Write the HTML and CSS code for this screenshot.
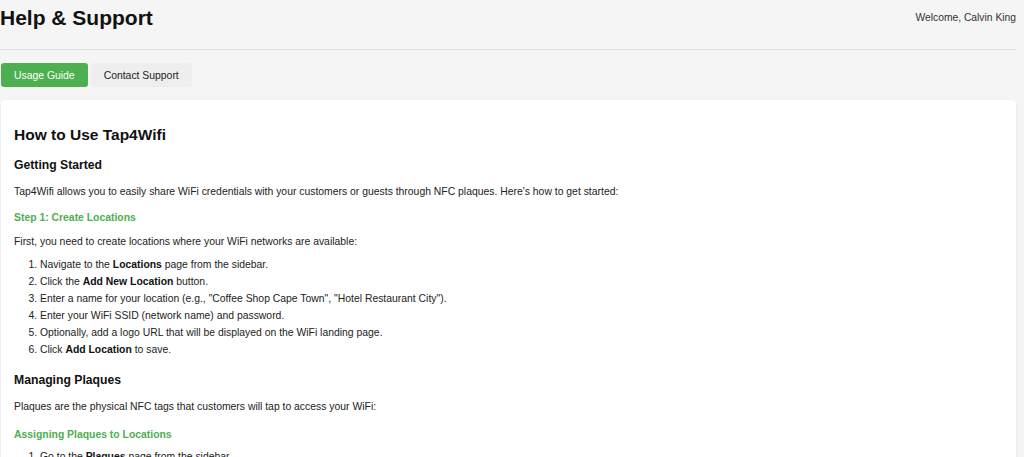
FILE: index.html
```html
<!DOCTYPE html>
<html lang="en">
<head>
<meta charset="utf-8">
<title>Help &amp; Support</title>
<link rel="stylesheet" href="styles.css">
</head>
<body>
<div class="page">
  <header class="topbar">
    <h1 class="title">Help &amp; Support</h1>
    <div class="welcome">Welcome, Calvin King</div>
  </header>
  <nav class="tabs">
    <button class="tab active">Usage Guide</button>
    <button class="tab">Contact Support</button>
  </nav>
  <section class="card">
    <h2 class="h2">How to Use Tap4Wifi</h2>
    <h3 class="h3">Getting Started</h3>
    <p class="p">Tap4Wifi allows you to easily share WiFi credentials with your customers or guests through NFC plaques. Here's how to get started:</p>
    <h4 class="h4">Step 1: Create Locations</h4>
    <p class="p p-after">First, you need to create locations where your WiFi networks are available:</p>
    <ol class="list">
      <li>Navigate to the <strong>Locations</strong> page from the sidebar.</li>
      <li>Click the <strong>Add New Location</strong> button.</li>
      <li>Enter a name for your location (e.g., "Coffee Shop Cape Town", "Hotel Restaurant City").</li>
      <li>Enter your WiFi SSID (network name) and password.</li>
      <li>Optionally, add a logo URL that will be displayed on the WiFi landing page.</li>
      <li>Click <strong>Add Location</strong> to save.</li>
    </ol>
    <h3 class="h3 h3-gap">Managing Plaques</h3>
    <p class="p">Plaques are the physical NFC tags that customers will tap to access your WiFi:</p>
    <h4 class="h4 h4-gap">Assigning Plaques to Locations</h4>
    <ol class="list list-gap">
      <li>Go to the <strong>Plaques</strong> page from the sidebar.</li>
      <li>Find the plaque you want to assign.</li>
    </ol>
  </section>
</div>
</body>
</html>
```
FILE: styles.css
```css
html, body {
  margin: 0;
  padding: 0;
  background: #f5f5f5;
  font-family: "Liberation Sans", Arial, sans-serif;
  color: #222;
  overflow: hidden;
}
.page {
  padding: 0 8px 0 0;
}
.topbar {
  display: flex;
  justify-content: space-between;
  align-items: center;
  height: 35px;
  border-bottom: 1px solid #e2e2e2;
  padding-bottom: 14px;
}
.title {
  margin: 0;
  font-size: 21px;
  font-weight: bold;
  color: #111;
  line-height: 35px;
}
.welcome {
  font-size: 10.3px;
  color: #333;
}
.tabs {
  display: flex;
  gap: 3px;
  margin: 13px 0 0 1px;
}
.tab {
  font-family: "Liberation Sans", Arial, sans-serif;
  font-size: 10.4px;
  border: none;
  border-radius: 3px;
  background: #eeeeee;
  color: #222;
  height: 24px;
  padding: 0 13px;
  cursor: pointer;
}
.tab.active {
  background: #4caf50;
  color: #fff;
}
.card {
  margin: 13px 0 0 1px;
  background: #fff;
  border-radius: 4px;
  box-shadow: 0 1px 3px rgba(0,0,0,0.08);
  padding: 21px 13px 20px 13px;
}
.h2 {
  margin: 5px 0 0;
  font-size: 15.5px;
  color: #111;
}
.h3 {
  margin: 14px 0 0;
  font-size: 12.2px;
  color: #111;
}
.h3-gap {
  margin-top: 15px;
}
.p {
  margin: 13px 0 0;
  font-size: 10.4px;
  line-height: 14px;
}
.p-after {
  margin-top: 12px;
}
.h4 {
  margin: 13px 0 0;
  font-size: 10.4px;
  color: #4caf50;
}
.h4-gap {
  margin-top: 15px;
}
.list {
  margin: 7px 0 0;
  padding-left: 26px;
  font-size: 10.4px;
  line-height: 17px;
}
.list-gap {
  margin-top: 8px;
}
.list strong {
  color: #111;
}
```
